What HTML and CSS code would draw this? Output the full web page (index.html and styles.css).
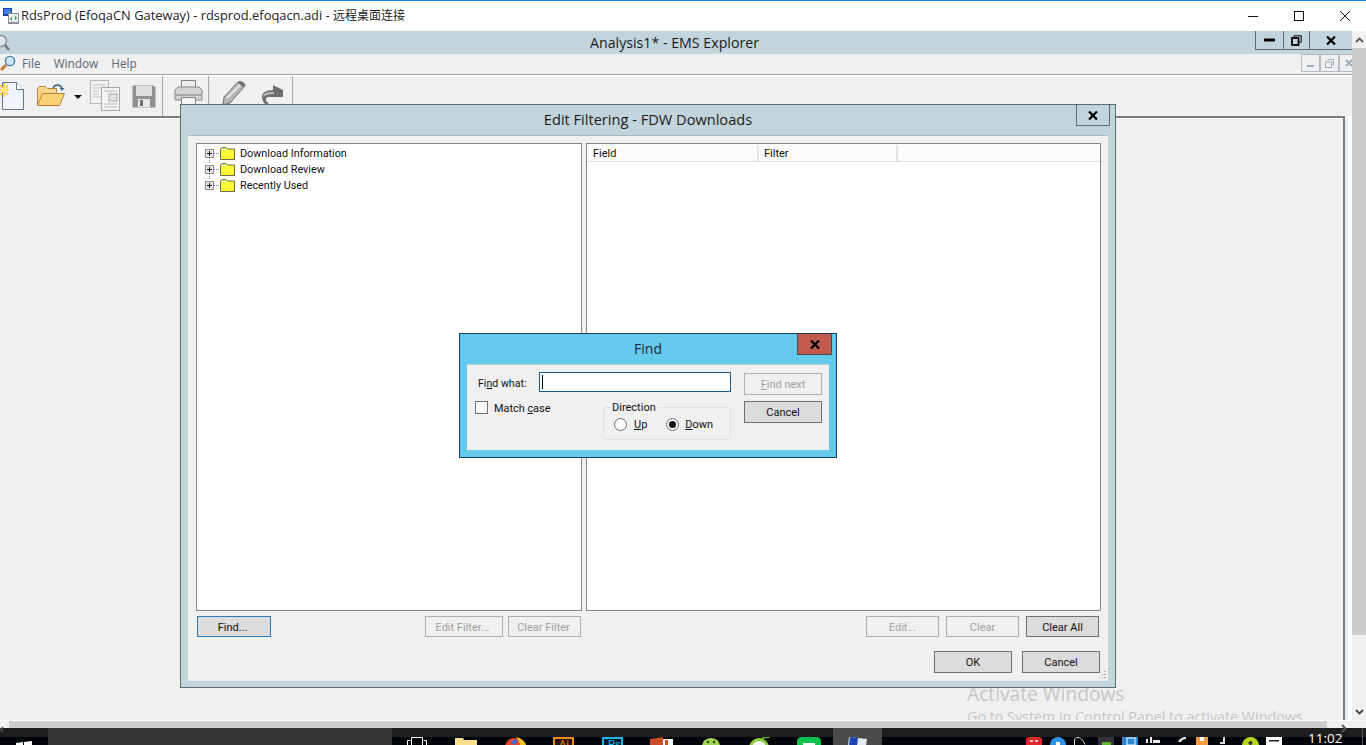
FILE: index.html
```html
<!DOCTYPE html>
<html lang="en">

<head>
    <meta charset="UTF-8">
    <title>Analysis1* - EMS Explorer</title>
    <link rel="stylesheet" href="styles.css">
</head>

<body>
    <div class="page">
        <!-- remote desktop window title -->
        <div class="rdp-bar">
            <svg class="rdp-icon" width="16" height="16" viewBox="0 0 16 16">
                <rect x="0" y="0" width="9" height="8" fill="#1c3fa8" />
                <rect x="1" y="1" width="7" height="5" fill="#3f7fe0" />
                <rect x="5" y="5" width="11" height="11" fill="#8d9299" />
                <rect x="6" y="6" width="9" height="8" fill="#e9edf0" />
                <path d="M7 11l2-2v4zM14 10l-2-2v4z" fill="#1f9a3c" />
            </svg>
            <span class="rdp-title">RdsProd (EfoqaCN Gateway) - rdsprod.efoqacn.adi - <span class="rdp-cjk">远程桌面连接</span></span>
            <div class="rdp-controls">
                <svg width="12" height="12" viewBox="0 0 12 12"><path d="M1 6.500h10" stroke="#111" /></svg>
                <svg width="12" height="12" viewBox="0 0 12 12"><rect x="1.500" y="1.500" width="9" height="9" fill="none" stroke="#111" /></svg>
                <svg width="12" height="12" viewBox="0 0 12 12"><path d="M1 1l10 10M11 1L1 11" stroke="#111" /></svg>
            </div>
        </div>

        <div class="remote">
            <div class="remote-main">
                <div class="app">
                    <div class="app-title">
                        <svg class="app-glass" width="10" height="17" viewBox="0 0 10 17">
                            <circle cx="1" cy="7" r="5.500" fill="#dfe7ea" stroke="#8a969c" stroke-width="1.500" />
                            <path d="M5 11l4 5" stroke="#777" stroke-width="2.500" />
                        </svg>
                        <span class="app-name">Analysis1* - EMS Explorer</span>
                        <div class="win-btns">
                            <button class="win-btn btn-min"><svg width="11" height="4" viewBox="0 0 11 4"><rect width="11" height="3" y="0.500" fill="#000" /></svg></button>
                            <button class="win-btn btn-restore"><svg width="11" height="11" viewBox="0 0 11 11"><path d="M3 2.500V.8h7.200v6.400H8.500" fill="none" stroke="#000" /><rect x="1" y="3" width="6.500" height="7" fill="none" stroke="#000" stroke-width="1.800" /></svg></button>
                            <button class="win-btn btn-close"><svg width="10" height="9" viewBox="0 0 10 9"><path d="M1 .5l8 8M9 .5l-8 8" stroke="#000" stroke-width="2.200" /></svg></button>
                        </div>
                    </div>

                    <div class="menubar">
                        <svg class="menu-glass" width="16" height="17" viewBox="0 0 16 17">
                            <path d="M6 10l-5 5" stroke="#c77b3a" stroke-width="3" />
                            <circle cx="10" cy="6" r="4.600" fill="#cfe6f7" stroke="#3f7fb5" stroke-width="1.400" />
                        </svg>
                        <span class="menu-item item-file">File</span>
                        <span class="menu-item item-window">Window</span>
                        <span class="menu-item item-help">Help</span>
                        <div class="mdi-btns">
                            <span class="mdi-btn"><svg width="7" height="8" viewBox="0 0 7 8"><rect y="6" width="7" height="2" fill="#a3adb5" /></svg></span>
                            <span class="mdi-btn"><svg width="9" height="9" viewBox="0 0 9 9"><path d="M3 2V.5h5.500v5H7" fill="none" stroke="#a3adb5" /><rect x=".5" y="3" width="6" height="5.500" fill="none" stroke="#a3adb5" /></svg></span>
                            <span class="mdi-btn"><svg width="8" height="8" viewBox="0 0 8 8"><path d="M1 1l6 6M7 1L1 7" stroke="#a3adb5" stroke-width="2" /></svg></span>
                        </div>
                    </div>

                    <div class="toolbar">
                        <svg class="tool tool-new" width="25" height="30" viewBox="0 0 25 30">
                            <path d="M2.500 1.500h14l7 7v20h-21z" fill="#f0f4fc" stroke="#5f7690" />
                            <path d="M16.500 1.500v7h7" fill="#fff" stroke="#5f7690" />
                            <path d="M4 2v14M-1 9h10M0 4l8 10M8 4L0 14" stroke="#f7c92f" stroke-width="1.500" />
                            <circle cx="4" cy="9" r="2.500" fill="#fde67a" />
                        </svg>
                        <svg class="tool tool-open" width="30" height="24" viewBox="0 0 30 24">
                            <path d="M1.500 22.500V5.500l2-2h6l2 2h9v4" fill="#f6d68b" stroke="#b5813a" />
                            <path d="M1.500 22.500l5-12h22l-5 12z" fill="#fbd273" stroke="#b5813a" />
                            <path d="M17 5c2-4 7-4 9 0" fill="none" stroke="#44688c" stroke-width="1.600" />
                            <path d="M23.500 5h5l-2.500 3z" fill="#44688c" />
                        </svg>
                        <span class="tool-caret"></span>
                        <svg class="tool tool-copy" width="31" height="31" viewBox="0 0 31 31">
                            <rect x=".5" y=".5" width="18" height="23" fill="#f2f2f2" stroke="#b5b5b5" />
                            <path d="M3 5h13M3 8h13M3 11h6M3 14h6M3 17h13" stroke="#c2c2c2" />
                            <rect x="11.500" y="7.500" width="18" height="23" fill="#f2f2f2" stroke="#a8a8a8" />
                            <path d="M14 11h13M14 24h13M14 27h13" stroke="#bdbdbd" />
                            <rect x="19" y="14" width="8" height="7" fill="#e3e3e3" stroke="#a8a8a8" />
                        </svg>
                        <svg class="tool tool-save" width="24" height="24" viewBox="0 0 24 24">
                            <path d="M.5 1.500h21l2 2v20H.5z" fill="#8f9090" />
                            <rect x="4" y="2" width="16" height="10" fill="#dedede" />
                            <rect x="6" y="15" width="12" height="8" fill="#e8e8e8" />
                            <rect x="8" y="16" width="3" height="6" fill="#6f6f6f" />
                        </svg>
                        <span class="tool-sep"></span>
                        <svg class="tool tool-print" width="29" height="24" viewBox="0 0 29 24">
                            <rect x="7.500" y=".5" width="14" height="8" fill="#ededed" stroke="#858585" />
                            <path d="M1 10l3-3h21l3 3v10H1z" fill="#d4d4d4" stroke="#858585" />
                            <rect x="1" y="14" width="27" height="2" fill="#a8a8a8" />
                            <rect x="7.500" y="17.500" width="14" height="7" fill="#f5f5f5" stroke="#858585" />
                        </svg>
                        <span class="tool-sep"></span>
                        <svg class="tool tool-pencil" width="24" height="26" viewBox="0 0 24 26">
                            <path d="M16 2l6 5L8 23l-7 2 1-8z" fill="#b5b5b5" stroke="#6f6f6f" />
                            <path d="M16 2c2-2 4-1 6 1s2 3 0 4z" fill="#6f6f6f" />
                            <path d="M5 18L18 5" stroke="#e6e6e6" stroke-width="2" />
                        </svg>
                        <svg class="tool tool-redo" width="23" height="22" viewBox="0 0 23 22">
                            <path d="M6 21C-1 14 1 6 13 6V1l10 5v7H8c-3 1-3 4 2 8z" fill="#6e6e6e" />
                            <path d="M3 13C3 9 8 8 14 8v2C8 10 6 11 3 13z" fill="#bcbcbc" />
                        </svg>
                        <span class="tool-sep sep-last"></span>
                    </div>

                    <div class="app-body">
                        <div class="workspace">
                            <div class="activate">
                                <div class="activate-head">Activate Windows</div>
                                <div class="activate-sub">Go to System in Control Panel to activate Windows.</div>
                            </div>
                        </div>
                    </div>
                </div>

                <div class="vscroll">
                    <span class="arrow-cell"><svg width="9" height="6" viewBox="0 0 9 6"><path d="M1 5l3.500-3.500L8 5" fill="none" stroke="#555" stroke-width="1.800" /></svg></span>
                    <span class="vthumb"></span>
                    <span class="arrow-down"><svg width="9" height="6" viewBox="0 0 9 6"><path d="M1 1l3.500 3.500L8 1" fill="none" stroke="#444" stroke-width="1.800" /></svg></span>
                </div>
            </div>

            <div class="hscroll">
                <span class="h-left"><svg width="4" height="7" viewBox="0 0 4 7"><path d="M3 1L.8 3.500 3 6" fill="none" stroke="#555" stroke-width="1.500" /></svg></span>
                <span class="hthumb"></span>
                <span class="h-right"><svg width="6" height="9" viewBox="0 0 6 9"><path d="M1 1l3.500 3.500L1 8" fill="none" stroke="#555" stroke-width="1.800" /></svg></span>
            </div>

            <!-- Edit Filtering window -->
            <div class="filter-win">
                <div class="filter-title">
                    <span>Edit Filtering - FDW Downloads</span>
                    <button class="win-btn dlg-close"><svg width="10" height="9" viewBox="0 0 10 9"><path d="M1 .5l8 8M9 .5l-8 8" stroke="#000" stroke-width="2.200" /></svg></button>
                </div>
                <div class="filter-body">
                    <div class="panes">
                        <div class="pane tree">
                            <div class="tree-row">
                                <span class="plus"></span><span class="dots"></span>
                                <svg class="folder" width="15" height="13" viewBox="0 0 15 13"><path d="M.5 12.500V2l1.500-1.500h4L7.500 2h7v10.500z" fill="#fbf83a" stroke="#6d6d4a" /><path d="M1 2h6v1H1z" fill="#fff" /></svg>
                                <span>Download Information</span>
                            </div>
                            <div class="tree-row">
                                <span class="plus"></span><span class="dots"></span>
                                <svg class="folder" width="15" height="13" viewBox="0 0 15 13"><path d="M.5 12.500V2l1.500-1.500h4L7.500 2h7v10.500z" fill="#fbf83a" stroke="#6d6d4a" /><path d="M1 2h6v1H1z" fill="#fff" /></svg>
                                <span>Download Review</span>
                            </div>
                            <div class="tree-row">
                                <span class="plus"></span><span class="dots"></span>
                                <svg class="folder" width="15" height="13" viewBox="0 0 15 13"><path d="M.5 12.500V2l1.500-1.500h4L7.500 2h7v10.500z" fill="#fbf83a" stroke="#6d6d4a" /><path d="M1 2h6v1H1z" fill="#fff" /></svg>
                                <span>Recently Used</span>
                            </div>
                        </div>
                        <div class="pane list">
                            <div class="list-head">
                                <span class="col col-field">Field</span>
                                <span class="col col-filter">Filter</span>
                            </div>
                        </div>
                    </div>
                    <div class="actions">
                        <div class="actions-left">
                            <button class="btn btn-focus btn-find">Find...</button>
                            <button class="btn btn-off btn-edit-filter">Edit Filter...</button>
                            <button class="btn btn-off btn-clear-filter">Clear Filter</button>
                        </div>
                        <div class="actions-right">
                            <button class="btn btn-off">Edit...</button>
                            <button class="btn btn-off">Clear</button>
                            <button class="btn">Clear All</button>
                        </div>
                    </div>
                    <div class="footer">
                        <button class="btn btn-wide">OK</button>
                        <button class="btn btn-wide">Cancel</button>
                    </div>
                    <svg class="grip" width="7" height="7" viewBox="0 0 7 7"><path d="M5 0h2v1H5zM3 3h1v1H3zM5 3h2v1H5zM0 6h1v1H0zM3 6h1v1H3zM5 6h2v1H5z" fill="#a5a5a5" /></svg>
                </div>
            </div>

            <!-- Find dialog -->
            <div class="find-win">
                <div class="find-title">
                    <span>Find</span>
                    <button class="find-close"><svg width="10" height="9" viewBox="0 0 10 9"><path d="M1 .5l8 8M9 .5l-8 8" stroke="#000" stroke-width="2.200" /></svg></button>
                </div>
                <div class="find-body">
                    <div class="find-left">
                        <div class="find-row">
                            <label class="find-label">Fi<u>n</u>d what:</label>
                            <div class="find-input"><span class="caret"></span></div>
                        </div>
                        <div class="find-row2">
                            <label class="match"><input type="checkbox" class="check"><span class="match-text">Match <u>c</u>ase</span></label>
                            <fieldset class="direction">
                                <legend>Direction</legend>
                                <label class="radio-up"><input type="radio" name="dir" class="radio"><span><u>U</u>p</span></label>
                                <label class="radio-down"><input type="radio" name="dir" class="radio" checked><span><u>D</u>own</span></label>
                            </fieldset>
                        </div>
                    </div>
                    <div class="find-right">
                        <button class="btn btn-off btn-wide"><u>F</u>ind next</button>
                        <button class="btn btn-wide">Cancel</button>
                    </div>
                </div>
            </div>
        </div>

        <!-- remote taskbar, cut off by the window edge -->
        <div class="taskbar">
            <div class="start">
                <svg width="16" height="14" viewBox="0 0 16 14"><path d="M0 2l7-1v6H0zM8 1l8-1v7H8zM0 8h7v5l-7-1zM8 8h8v6l-8-1z" fill="#fff" /></svg>
            </div>
            <div class="search">搜索 Web 和 Windows</div>
            <div class="tasks">
                <span class="task"><svg width="20" height="8" viewBox="0 0 20 8"><path d="M.5 8V3.500h3M16.500 3.500h3V8M4.500 8V.5h11V8" fill="none" stroke="#fff" /></svg></span>
                <span class="task"><svg width="22" height="8" viewBox="0 0 22 8"><path d="M0 8V1h8l1 2h13v5z" fill="#fbe08f" /></svg></span>
                <span class="task"><svg width="22" height="8" viewBox="0 0 22 8"><circle cx="10" cy="10" r="9" fill="#e8452c" /><path d="M12 0c5 1 9 4 10 8h-6c0-3-2-5-4-8z" fill="#f7c61e" /><path d="M7 5l4-3 3 2-4 4z" fill="#3a6fd8" /></svg></span>
                <span class="task"><span class="app-tile tile-ai">Ai</span></span>
                <span class="task"><span class="app-tile tile-ps">Ps</span></span>
                <span class="task"><svg width="23" height="8" viewBox="0 0 23 8"><path d="M0 2l13-2v8H0z" fill="#cf4a2b" /><rect x="13" y="2" width="10" height="6" fill="#fff" /><rect x="15" y="3" width="3" height="5" fill="#cf4a2b" /></svg></span>
                <span class="task"><svg width="18" height="8" viewBox="0 0 18 8"><ellipse cx="9" cy="9" rx="9" ry="8" fill="#9ed44f" /><circle cx="6" cy="5" r="1.200" fill="#27431a" /><circle cx="12" cy="5" r="1.200" fill="#27431a" /></svg></span>
                <span class="task"><svg width="22" height="9" viewBox="0 0 22 9"><circle cx="10" cy="11" r="10" fill="#8ecb3d" /><circle cx="10" cy="11" r="7" fill="#f4f4f4" /><path d="M12 2c3-2 6-2 9-2" stroke="#5fae2c" stroke-width="1.500" fill="none" /></svg></span>
                <span class="task"><svg width="24" height="8" viewBox="0 0 24 8"><path d="M0 8V4c0-2 2-4 4-4h16c2 0 4 2 4 4v4z" fill="#0cc04f" /><rect x="6" y="6" width="12" height="2" fill="#fff" /></svg></span>
                <span class="task task-active"><svg width="20" height="9" viewBox="0 0 20 9"><path d="M1 0l18 2-1 7H0z" fill="#e6e9f2" /><path d="M2 0l8 1-1 8H1z" fill="#1f45b5" /></svg></span>
            </div>
            <div class="tray">
                <span class="tray-item"><svg width="16" height="8" viewBox="0 0 16 8"><path d="M0 8V3c0-2 1-3 3-3h10c2 0 3 1 3 3v5z" fill="#e5242b" /><path d="M4 4h3M9 4h3" stroke="#fff" stroke-width="1.500" /></svg></span>
                <span class="tray-item"><svg width="16" height="8" viewBox="0 0 16 8"><circle cx="8" cy="8" r="8" fill="#2e93e8" /><path d="M6 5h4v3H6z" fill="#fff" /></svg></span>
                <span class="tray-item"><svg width="12" height="8" viewBox="0 0 12 8"><path d="M.5 8V3C.5 1.500 2 .5 4 .5s5 2 7 7" fill="none" stroke="#ddd" /></svg></span>
                <span class="tray-item"><svg width="16" height="8" viewBox="0 0 16 8"><rect width="16" height="8" fill="#30343a" /><rect x="4" y="5" width="9" height="3" fill="#5fb52e" /></svg></span>
                <span class="tray-item"><svg width="16" height="8" viewBox="0 0 16 8"><rect width="16" height="8" fill="#2b85cf" /><rect x="5" y="1" width="8" height="7" fill="none" stroke="#fff" /></svg></span>
                <span class="tray-item"><svg width="14" height="6" viewBox="0 0 14 6"><path d="M0 2h2v4H0zM4 0h2v6H4zM7 3h7v3H7z" fill="#eee" /></svg></span>
                <span class="tray-item tray-shift"><svg width="8" height="5" viewBox="0 0 8 5"><path d="M0 5c1-3 4-5 8-5v2C6 2 4 3 3 5z" fill="#ddd" /></svg></span>
                <span class="tray-item tray-orange"><svg width="12" height="8" viewBox="0 0 12 8"><rect width="12" height="8" fill="#f29b42" /><rect x="4" y="0" width="4" height="4" fill="#fff" /></svg></span>
                <span class="tray-item tray-mid"><svg width="6" height="7" viewBox="0 0 6 7"><path d="M3 0h2v7H0V5h3z" fill="#ddd" /></svg></span>
                <span class="tray-item"><svg width="17" height="8" viewBox="0 0 17 8"><circle cx="8.500" cy="8.500" r="8.500" fill="#b7d61e" /><circle cx="8.500" cy="6" r="2" fill="#333" /></svg></span>
                <span class="tray-item"><svg width="16" height="8" viewBox="0 0 16 8"><rect width="16" height="8" fill="#fff" /><rect x="3" y="3" width="10" height="1.500" fill="#222" /></svg></span>
            </div>
            <div class="clock">11:02</div>
            <span class="show-desktop"></span>
        </div>
    </div>
</body>

</html>
```
FILE: styles.css
```css
* {
    margin: 0;
    padding: 0;
    box-sizing: border-box;
}

body {
    overflow: hidden;
    font-family: Roboto, "Noto Sans CJK SC", sans-serif;
    font-size: 11px;
    color: #111;
}

button {
    font-family: inherit;
    color: inherit;
}

svg {
    display: block;
    flex: none;
}

.page {
    width: 1366px;
    height: 745px;
    display: flex;
    flex-direction: column;
    overflow: hidden;
}

/* rdp window title */
.rdp-bar {
    height: 31px;
    flex: none;
    display: flex;
    align-items: center;
    border-top: 1px solid #0a84d8;
    background: #fff;
}

.rdp-icon {
    margin-left: 3px;
}

.rdp-title {
    margin: 0 0 2px 2px;
    font-family: "Open Sans", "Noto Sans CJK SC", sans-serif;
    font-size: 12.88px;
    color: #222;
}

.rdp-cjk {
    font-size: 12px;
}

.rdp-controls {
    margin-left: auto;
    display: flex;
    gap: 34px;
    padding-right: 15px;
}

.remote {
    position: relative;
    z-index: 1;
    flex: 1;
    display: flex;
    flex-direction: column;
    min-height: 0;
}

.remote-main {
    flex: 1;
    display: flex;
    min-height: 0;
}

.app {
    flex: 1;
    display: flex;
    flex-direction: column;
    min-width: 0;
}

/* app title */
.app-title {
    height: 23px;
    flex: none;
    display: flex;
    align-items: flex-start;
    background: #c3d5dc;
}

.app-glass {
    margin-top: 3px;
}

.app-name {
    margin-left: 580px;
    margin-top: 2px;
    font-family: "Open Sans", sans-serif;
    font-size: 14.2px;
    color: #1a1a1a;
}

.win-btns {
    margin-left: auto;
    display: flex;
    height: 19px;
}

.win-btn {
    display: flex;
    align-items: center;
    justify-content: center;
    background: #c3d5dc;
    border: 1px solid #5f6b72;
    border-top: none;
    border-right: none;
}

.btn-min {
    width: 28px;
}

.btn-restore {
    width: 26px;
}

.btn-close {
    width: 43px;
}

/* menu */
.menubar {
    height: 21px;
    flex: none;
    display: flex;
    align-items: flex-start;
    background: #f0f0f0;
    border-bottom: 1px solid #a0a0a0;
}

.menu-glass {
    margin-top: 1px;
}

.menu-item {
    margin-top: 1px;
    font-family: "Open Sans", sans-serif;
    font-size: 11.8px;
    color: #5c6670;
}

.item-file {
    margin-left: 6px;
}

.item-window {
    margin-left: 13px;
}

.item-help {
    margin-left: 13px;
}

.mdi-btns {
    margin-left: auto;
    display: flex;
    width: 51px;
    height: 18px;
    overflow: hidden;
}

.mdi-btn {
    width: 19px;
    height: 18px;
    flex: none;
    display: flex;
    align-items: center;
    justify-content: center;
    border: 1px solid #b4bcc2;
    background: #f0f0f0;
}

/* toolbar */
.toolbar {
    height: 41px;
    flex: none;
    display: flex;
    align-items: flex-start;
    background: #f0f0f0;
    box-shadow: inset 0 1px 0 #fff;
}

.tool-new {
    margin-top: 6px;
}

.tool-open {
    margin: 8px 0 0 11px;
}

.tool-caret {
    margin: 20px 0 0 8px;
    width: 0;
    height: 0;
    border: 4px solid transparent;
    border-top-color: #111;
    border-bottom: none;
}

.tool-copy {
    margin: 5px 0 0 8px;
}

.tool-save {
    margin: 9px 0 0 11px;
}

.tool-sep {
    width: 1px;
    height: 40px;
    margin: 1px 0 0 6px;
    background: #a8a8a8;
}

.tool-print {
    margin: 5px 0 0 11px;
}

.tool-print + .tool-sep {
    margin-left: 5px;
}

.tool-pencil {
    margin: 5px 0 0 13px;
}

.tool-redo {
    margin: 9px 0 0 14px;
}

.sep-last {
    margin-left: 9px;
}

/* workspace under the toolbar */
.app-body {
    flex: 1;
    display: flex;
    background: #fff;
    min-height: 0;
}

.workspace {
    flex: 1;
    margin-right: 7px;
    position: relative;
    overflow: hidden;
    background: #f0f0f0;
    border-top: 2px solid #7c7c7c;
    border-right: 2px solid #7c7c7c;
    box-shadow: inset 0 1px 0 #fff, 3px 0 0 #e8eefb;
}

.activate {
    position: absolute;
    left: 967px;
    top: 562px;
    font-family: "Open Sans", sans-serif;
    color: #c6c6c6;
    white-space: nowrap;
}

.activate-head {
    font-size: 19.2px;
}

.activate-sub {
    font-size: 14.3px;
}

.vscroll {
    width: 14px;
    flex: none;
    display: flex;
    flex-direction: column;
    background: #f0f0f0;
}

.arrow-cell {
    height: 17px;
    display: flex;
    align-items: center;
    justify-content: center;
}

.vthumb {
    height: 587px;
    background: #cdcdcd;
}

.arrow-down {
    margin-top: auto;
    height: 17px;
    display: flex;
    align-items: center;
    justify-content: center;
}

.hscroll {
    height: 8px;
    flex: none;
    display: flex;
    border-top: 1px solid #fff;
    background: #f0f0f0;
}

.h-left {
    width: 9px;
    padding-top: 5px;
}

.hthumb {
    width: 1318px;
    background: #cdcdcd;
}

.h-right {
    margin-left: 14px;
    padding-top: 3px;
}

/* edit filtering window */
.filter-win {
    position: absolute;
    left: 180px;
    top: 73px;
    width: 936px;
    height: 584px;
    display: flex;
    flex-direction: column;
    background: #c3d5dc;
    border: 1px solid #5f6b72;
}

.filter-title {
    position: relative;
    height: 30px;
    flex: none;
    display: flex;
    align-items: center;
    justify-content: center;
    padding-bottom: 3px;
    font-family: "Open Sans", sans-serif;
    font-size: 14.6px;
    color: #1a1a1a;
}

.dlg-close {
    position: absolute;
    right: 5px;
    top: 0;
    width: 34px;
    height: 21px;
    border-right: 1px solid #5f6b72;
}

.filter-body {
    position: relative;
    flex: 1;
    margin: 0 7px 6px;
    padding: 7px 8px 0;
    background: #f0f0f0;
    border-top: 1px solid #a9b6bc;
}

.panes {
    display: grid;
    grid-template-columns: 386px 515px;
    column-gap: 4px;
    height: 468px;
}

.pane {
    background: #fff;
    border: 1px solid #82878f;
}

.tree {
    padding: 1px 0 0 8px;
    font-size: 10.8px;
}

.tree-row {
    position: relative;
    height: 16px;
    display: flex;
    align-items: center;
}

.tree-row:not(:last-child)::after {
    content: "";
    position: absolute;
    left: 4px;
    top: 13px;
    width: 1px;
    height: 6px;
    background: repeating-linear-gradient(#888 0 1px, transparent 1px 2px);
}

.plus {
    position: relative;
    width: 9px;
    height: 9px;
    flex: none;
    background: #e6e6e6;
    border: 1px solid #8c8c8c;
}

.plus::before {
    content: "";
    position: absolute;
    left: 1px;
    top: 3px;
    width: 5px;
    height: 1px;
    background: #111;
}

.plus::after {
    content: "";
    position: absolute;
    left: 3px;
    top: 1px;
    width: 1px;
    height: 5px;
    background: #111;
}

.dots {
    width: 6px;
    height: 1px;
    flex: none;
    background: repeating-linear-gradient(90deg, #888 0 1px, transparent 1px 2px);
}

.folder {
    margin-right: 5px;
}

.list-head {
    display: flex;
    height: 17px;
    margin: 1px 0 0 1px;
    background: #fbfbfb;
    border-bottom: 1px solid #e0e0e0;
}

.col {
    padding: 2px 0 0 5px;
    border-right: 2px solid #e4e4e4;
}

.col-field {
    width: 171px;
}

.col-filter {
    width: 139px;
}

.actions {
    display: grid;
    grid-template-columns: 386px 515px;
    column-gap: 4px;
    margin-top: 5px;
}

.actions-left {
    display: flex;
    padding: 0 1px;
}

.actions-right {
    display: flex;
    justify-content: flex-end;
    gap: 7px;
    padding-right: 2px;
}

.btn {
    width: 73px;
    height: 21px;
    padding-top: 1px;
    font-size: 11px;
    background: #dcdcdc;
    border: 1px solid #707070;
}

.btn-off {
    color: #a0a0a0;
    background: #f0f0f0;
    border-color: #adadad;
}

.btn-focus {
    border-color: #2e7ab5;
}

.btn-find {
    width: 74px;
    padding-right: 3px;
}

.btn-edit-filter {
    width: 78px;
    margin-left: auto;
    padding-right: 3px;
}

.btn-clear-filter {
    margin-left: 5px;
    padding-right: 2px;
}

.btn-wide {
    width: 78px;
    height: 22px;
    padding-top: 0;
}

.footer {
    display: flex;
    justify-content: flex-end;
    gap: 10px;
    margin-top: 14px;
}

.grip {
    position: absolute;
    right: 2px;
    bottom: 3px;
}

/* find dialog */
.find-win {
    position: absolute;
    left: 459px;
    top: 302px;
    width: 378px;
    height: 125px;
    display: flex;
    flex-direction: column;
    background: #65c9ec;
    border: 1px solid #1b3f55;
}

.find-title {
    position: relative;
    height: 30px;
    flex: none;
    display: flex;
    align-items: center;
    justify-content: center;
    padding-bottom: 2px;
    font-family: "Open Sans", sans-serif;
    font-size: 14px;
    color: #1a2a30;
}

.find-close {
    position: absolute;
    right: 4px;
    top: 0;
    width: 35px;
    height: 21px;
    display: flex;
    align-items: center;
    justify-content: center;
    background: #c25b4e;
    border: 1px solid #4a4a4a;
    border-top: none;
}

.find-body {
    flex: 1;
    margin: 0 7px 7px;
    padding: 7px 0 0 8px;
    display: flex;
    background: #f0f0f0;
    border-top: 1px solid #b8d0da;
}

.find-left {
    width: 256px;
}

.find-row {
    display: flex;
    align-items: center;
    height: 20px;
}

.find-label {
    margin-left: 3px;
    width: 61px;
    padding-top: 2px;
    font-size: 10.6px;
}

.find-input {
    width: 192px;
    height: 20px;
    padding: 2px 0 0 2px;
    background: #fff;
    border: 1px solid #1c5a8c;
}

.caret {
    display: block;
    width: 1px;
    height: 14px;
    background: #000;
}

.find-row2 {
    display: flex;
    justify-content: space-between;
    margin-top: 9px;
}

.match {
    display: flex;
    align-items: flex-start;
    height: 16px;
    margin-top: -1px;
}

.match-text {
    margin-top: 2px;
    font-size: 10.9px;
}

.check {
    appearance: none;
    width: 13px;
    height: 13px;
    margin: 1px 6px 0 0;
    background: #fafafa;
    border: 1px solid #707070;
}

.direction {
    width: 128px;
    height: 39px;
    padding: 4px 0 0 10px;
    display: flex;
    align-items: flex-start;
    border: 1px solid #dde1e6;
    border-radius: 3px;
}

.direction legend {
    margin-left: -3px;
    padding: 0 1px;
}

.direction label {
    display: flex;
    align-items: center;
}

.radio-down {
    margin-left: 19px;
}

.radio {
    appearance: none;
    position: relative;
    width: 13px;
    height: 13px;
    margin-right: 7px;
    background: #fafafa;
    border: 1px solid #707070;
    border-radius: 50%;
}

.radio-down .radio {
    margin-right: 6px;
}

.radio:checked::after {
    content: "";
    position: absolute;
    left: 2px;
    top: 2px;
    width: 7px;
    height: 7px;
    background: #111;
    border-radius: 50%;
}

.find-right {
    margin: 1px 0 0 13px;
    display: flex;
    flex-direction: column;
    gap: 6px;
}

/* taskbar */
.taskbar {
    height: 17px;
    flex: none;
    display: flex;
    background: linear-gradient(#1e1e1e 9px, #02050a 9px);
    overflow: hidden;
}

.taskbar > * {
    flex: none;
}

.start {
    width: 48px;
    padding: 13px 0 0 16px;
}

.search {
    width: 344px;
    padding: 13px 0 0 10px;
    background: #333;
    color: #b0b0b0;
    font-size: 14px;
    white-space: nowrap;
}

.tasks {
    display: flex;
}

.task {
    width: 49px;
    display: flex;
    justify-content: center;
    padding-top: 9px;
}

.task-active {
    background: #4a4a4a;
}

.app-tile {
    width: 21px;
    height: 12px;
    padding-left: 4px;
    font-size: 11px;
    line-height: 12px;
    border: 2px solid;
}

.tile-ai {
    color: #f08a1d;
    background: #2a1505;
}

.tile-ps {
    color: #1fb4e8;
    background: #041a28;
}

.tray {
    margin-left: 144px;
    display: flex;
}

.tray-item {
    width: 24px;
    padding-top: 9px;
}

.tray-shift {
    padding-left: 8px;
}

.tray-orange {
    padding-left: 2px;
}

.tray-mid {
    padding-left: 2px;
}

.clock {
    width: 31px;
    margin-left: 18px;
    padding-top: 1px;
    font-family: "Open Sans", sans-serif;
    font-size: 13.5px;
    color: #fff;
}

.show-desktop {
    width: 1px;
    height: 17px;
    margin-left: 23px;
    background: #555;
}
```
